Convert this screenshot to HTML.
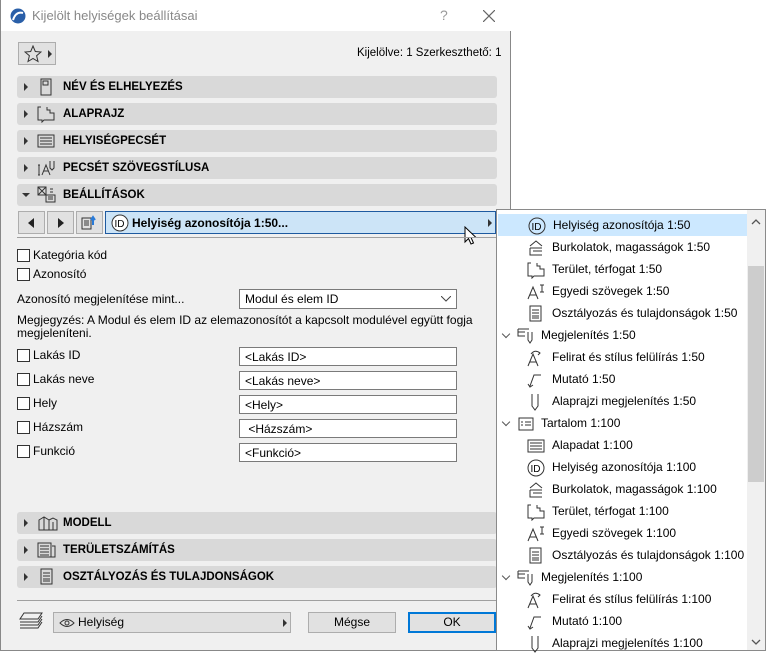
<!DOCTYPE html>
<html><head><meta charset="utf-8"><style>
*{box-sizing:border-box;margin:0;padding:0}
body{width:766px;height:651px;background:#fff;font-family:"Liberation Sans",sans-serif;font-size:12px;color:#000;position:relative;overflow:hidden}
.dlg{position:absolute;left:0;top:0;width:511px;height:651px;background:#f0f0f0;border:1px solid #888;border-top:none}
.title{position:absolute;left:0;top:0;width:510px;height:31px;background:#fff;color:#888;font-size:13px}
.abs{position:absolute}
.sec{position:absolute;left:16px;width:480px;height:22px;background:#d9d9d9;border-radius:3px;font-weight:bold;font-size:11.5px}
.sec .tri{position:absolute;left:7px;top:7px;width:0;height:0;border-left:4px solid #333;border-top:4px solid transparent;border-bottom:4px solid transparent}
.sec .lbl{position:absolute;left:46px;top:5px}
.sec svg{position:absolute;left:20px;top:2px}
.cb{position:absolute;left:16px;width:13px;height:13px;border:1px solid #333;background:#fff}
.cbl{position:absolute;left:32px}
.inp{position:absolute;left:238px;width:218px;height:19px;border:1px solid #7a7a7a;background:#fff;padding:2px 5px}
.btn{position:absolute;height:21px;border:1px solid #adadad;background:#e1e1e1;text-align:center;line-height:19px}
.pop{position:absolute;left:496px;top:209px;width:270px;height:442px;background:#fff;border:1px solid #8a8a8a}
.it{position:absolute;left:0;width:249px;height:22px;line-height:22px}
.it span{position:absolute;left:55px}
.it.g span{left:44px}
.it svg{position:absolute;left:30px;top:3px}
.it.g svg{left:20px}
.chev{position:absolute;left:6px;top:7px;width:6px;height:6px;border-right:1.3px solid #555;border-bottom:1.3px solid #555;transform:rotate(45deg)}
</style></head><body>
<div class="dlg">
 <div class="title">
  <svg class="abs" style="left:9px;top:8px" width="16" height="16"><circle cx="8" cy="8" r="7.5" fill="#2a5fa8"/><path d="M3 12 Q6 3 13 5" stroke="#fff" stroke-width="2" fill="none"/></svg>
  <div class="abs" style="left:31px;top:8px">Kijelölt helyiségek beállításai</div>
  <div class="abs" style="left:439px;top:7px;color:#999;font-size:14px">?</div>
  <svg class="abs" style="left:482px;top:10px" width="12" height="12"><path d="M0 0L12 12M12 0L0 12" stroke="#666" stroke-width="1.2"/></svg>
 </div>
 <div class="abs" style="left:17px;top:42px;width:38px;height:23px;border:1px solid #adadad;background:#e1e1e1">
  <svg class="abs" style="left:5px;top:2px" width="18" height="18"><path d="M9 1L11.3 6.5 17 7 12.6 10.7 14 16.5 9 13.5 4 16.5 5.4 10.7 1 7 6.7 6.5Z" fill="none" stroke="#333"/></svg>
  <div class="abs" style="left:29px;top:7px;border-left:4px solid #333;border-top:4px solid transparent;border-bottom:4px solid transparent"></div>
 </div>
 <div class="abs" style="left:356px;top:47px;font-size:11.5px">Kijelölve: 1 Szerkeszthető: 1</div>

 <div class="sec" style="top:76px"><div class="tri"></div><svg width="18" height="18"><rect x="4" y="1" width="10" height="16" fill="none" stroke="#333"/><rect x="6" y="3" width="5" height="4" fill="none" stroke="#333"/></svg><div class="lbl">NÉV ÉS ELHELYEZÉS</div></div>
 <div class="sec" style="top:103px"><div class="tri"></div><svg width="20" height="18"><path d="M4 2H1V15H5V17L7 15H17V8H13V5H10V2" fill="none" stroke="#333"/></svg><div class="lbl">ALAPRAJZ</div></div>
 <div class="sec" style="top:130px"><div class="tri"></div><svg width="20" height="18"><rect x="1" y="3" width="16" height="12" fill="none" stroke="#333"/><path d="M3 6H15M3 9H15M3 12H15" stroke="#333"/></svg><div class="lbl">HELYISÉGPECSÉT</div></div>
 <div class="sec" style="top:157px"><div class="tri"></div><svg width="24" height="18"><path d="M2 6V16M1 6H3M1 16H3M5 16L9 6 13 16M7 12H11M13 2V9L15 11 17 9V2" fill="none" stroke="#333"/></svg><div class="lbl">PECSÉT SZÖVEGSTÍLUSA</div></div>
 <div class="sec" style="top:184px"><div class="tri" style="left:5px;top:9px;border-left:4px solid transparent;border-right:4px solid transparent;border-top:4px solid #333;border-bottom:none"></div><svg width="22" height="18"><rect x="1" y="1" width="8" height="8" fill="none" stroke="#333"/><path d="M1 1L9 9M9 1L1 9" stroke="#333"/><rect x="9" y="9" width="9" height="7" fill="none" stroke="#333"/><path d="M11 11H16M11 13H16M13 3H16M13 6H16" stroke="#333"/></svg><div class="lbl">BEÁLLÍTÁSOK</div></div>

 <div class="btn" style="left:17px;top:211px;width:27px;height:23px"><div class="abs" style="left:9px;top:6px;border-right:6px solid #222;border-top:5px solid transparent;border-bottom:5px solid transparent"></div></div>
 <div class="btn" style="left:46px;top:211px;width:27px;height:23px"><div class="abs" style="left:10px;top:6px;border-left:6px solid #222;border-top:5px solid transparent;border-bottom:5px solid transparent"></div></div>
 <div class="btn" style="left:75px;top:211px;width:27px;height:23px"><svg class="abs" style="left:4px;top:3px" width="18" height="16"><rect x="1" y="3" width="9" height="11" fill="none" stroke="#333"/><path d="M3 6H8M3 8H8M3 10H8" stroke="#333"/><path d="M12 10V3M10 5L12 2 14 5" stroke="#2a7bd8" stroke-width="2" fill="none"/></svg></div>
 <div class="abs" style="left:104px;top:211px;width:391px;height:23px;background:#cce4f7;border:1px solid #1e5aa0">
  <svg class="abs" style="left:5px;top:2px" width="18" height="18"><circle cx="9" cy="9" r="8" fill="#fff" stroke="#333"/><text x="3.5" y="13" font-size="10" font-family="Liberation Sans">ID</text></svg>
  <div class="abs" style="left:26px;top:4px;font-weight:bold">Helyiség azonosítója 1:50...</div>
  <div class="abs" style="left:382px;top:7px;border-left:4px solid #333;border-top:4px solid transparent;border-bottom:4px solid transparent"></div>
 </div>
 <svg class="abs" style="left:463px;top:226px" width="14" height="20"><path d="M1 1V16L4.5 12.5 7 18 9.5 17 7 11.5H12Z" fill="#fff" stroke="#000"/></svg>
 <div class="abs" style="left:16px;top:237px;width:480px;border-top:1px solid #a0a0a0"></div>

 <div class="cb" style="top:249px"></div><div class="cbl" style="top:248px">Kategória kód</div>
 <div class="cb" style="top:268px"></div><div class="cbl" style="top:267px">Azonosító</div>
 <div class="abs" style="left:16px;top:292px">Azonosító megjelenítése mint...</div>
 <div class="inp" style="top:289px;height:20px;padding-top:2px">Modul és elem ID<svg class="abs" style="right:5px;top:6px" width="10" height="6"><path d="M0 0L5 5 10 0" fill="none" stroke="#444"/></svg></div>
 <div class="abs" style="left:16px;top:314px;line-height:13px;width:470px">Megjegyzés: A Modul és elem ID az elemazonosítót a kapcsolt modulével együtt fogja megjeleníteni.</div>

 <div class="cb" style="top:349px"></div><div class="cbl" style="top:348px">Lakás ID</div><div class="inp" style="top:347px">&lt;Lakás ID&gt;</div>
 <div class="cb" style="top:373px"></div><div class="cbl" style="top:372px">Lakás neve</div><div class="inp" style="top:371px">&lt;Lakás neve&gt;</div>
 <div class="cb" style="top:397px"></div><div class="cbl" style="top:396px">Hely</div><div class="inp" style="top:395px">&lt;Hely&gt;</div>
 <div class="cb" style="top:421px"></div><div class="cbl" style="top:420px">Házszám</div><div class="inp" style="top:419px">&nbsp;&lt;Házszám&gt;</div>
 <div class="cb" style="top:445px"></div><div class="cbl" style="top:444px">Funkció</div><div class="inp" style="top:443px">&lt;Funkció&gt;</div>

 <div class="sec" style="top:512px"><div class="tri"></div><svg width="22" height="18"><path d="M2 6L7 3 12 6V16H2Z M7 3V16M12 6L16 4 20 6V16H12M16 8V16" fill="none" stroke="#333"/></svg><div class="lbl">MODELL</div></div>
 <div class="sec" style="top:539px"><div class="tri"></div><svg width="22" height="18"><rect x="1" y="2" width="13" height="14" fill="none" stroke="#333"/><path d="M3 5H12M3 8H12M3 11H12M3 14H12M15 5H18V16H14" fill="none" stroke="#333"/></svg><div class="lbl">TERÜLETSZÁMÍTÁS</div></div>
 <div class="sec" style="top:566px"><div class="tri"></div><svg width="20" height="18"><rect x="4" y="1" width="11" height="15" fill="none" stroke="#333"/><path d="M6 5H13M6 8H13M6 11H13M6 13H13" stroke="#333"/></svg><div class="lbl">OSZTÁLYOZÁS ÉS TULAJDONSÁGOK</div></div>
 <div class="abs" style="left:16px;top:600px;width:480px;border-top:1px solid #a0a0a0"></div>

 <svg class="abs" style="left:17px;top:611px" width="26" height="20"><path d="M6 2H24L20 8H2Z M2 11H20L24 5 M2 14H20L24 8 M2 17H20L24 11" fill="none" stroke="#333"/></svg>
 <div class="btn" style="left:52px;top:612px;width:238px;text-align:left;padding-left:24px">Helyiség<svg class="abs" style="left:5px;top:5px" width="16" height="10"><path d="M1 5Q8 -2 15 5Q8 12 1 5Z" fill="none" stroke="#333"/><circle cx="8" cy="5" r="2" fill="none" stroke="#333"/></svg><div class="abs" style="left:229px;top:6px;border-left:4px solid #333;border-top:4px solid transparent;border-bottom:4px solid transparent"></div></div>
 <div class="btn" style="left:307px;top:612px;width:88px">Mégse</div>
 <div class="btn" style="left:407px;top:612px;width:88px;border:2px solid #0078d7;line-height:17px">OK</div>
</div>

<div class="pop">
 <div class="abs" style="left:250px;top:0;width:18px;height:440px;background:#f0f0f0"></div>
 <div class="abs" style="left:251px;top:56px;width:16px;height:216px;background:#cdcdcd"></div>
 <svg class="abs" style="left:254px;top:9px" width="10" height="6"><path d="M1 5L5 1 9 5" fill="none" stroke="#555" stroke-width="1.3"/></svg>
 <svg class="abs" style="left:254px;top:429px" width="10" height="6"><path d="M1 1L5 5 9 1" fill="none" stroke="#555" stroke-width="1.3"/></svg>

 <div class="it" style="top:4px;left:1px;background:#cce8ff"><svg width="18" height="18"><circle cx="9" cy="9" r="8" fill="none" stroke="#333"/><text x="3.5" y="13" font-size="10" font-family="Liberation Sans">ID</text></svg><span>Helyiség azonosítója 1:50</span></div>
 <div class="it" style="top:26px"><svg width="18" height="18"><path d="M3 7L9 2 15 7M3 9H15M3 9V16H15M6 12H15" fill="none" stroke="#333"/></svg><span>Burkolatok, magasságok 1:50</span></div>
 <div class="it" style="top:48px"><svg width="20" height="18"><path d="M4 2H1V15H5V17L7 15H17V8H13V5H10V2" fill="none" stroke="#333"/></svg><span>Terület, térfogat 1:50</span></div>
 <div class="it" style="top:70px"><svg width="20" height="18"><path d="M1 16L6 4 11 16M3 12H9M13 2H17M15 2V9M13 9H17" fill="none" stroke="#333"/></svg><span>Egyedi szövegek 1:50</span></div>
 <div class="it" style="top:92px"><svg width="18" height="18"><rect x="3" y="1" width="11" height="15" fill="none" stroke="#333"/><path d="M5 5H12M5 8H12M5 11H12M5 13H12" stroke="#333"/></svg><span>Osztályozás és tulajdonságok 1:50</span></div>
 <div class="it g" style="top:114px"><div class="chev"></div><svg width="20" height="18"><path d="M1 2H12M1 2V9H8M1 5H8M11 5V13L13 16 15 13V5" fill="none" stroke="#333"/></svg><span>Megjelenítés 1:50</span></div>
 <div class="it" style="top:136px"><svg width="20" height="18"><path d="M1 17L6 5 11 17M3 13H9M4 5Q8 0 13 4L11 6" fill="none" stroke="#333"/></svg><span>Felirat és stílus felülírás 1:50</span></div>
 <div class="it" style="top:158px"><svg width="20" height="18"><path d="M3 15L7 4H14M1 13L3 16 6 14" fill="none" stroke="#333"/></svg><span>Mutató 1:50</span></div>
 <div class="it" style="top:180px"><svg width="18" height="18"><path d="M5 1V13L8 17 11 13V1" fill="none" stroke="#333"/></svg><span>Alaprajzi megjelenítés 1:50</span></div>
 <div class="it g" style="top:202px"><div class="chev"></div><svg width="20" height="18"><rect x="2" y="3" width="14" height="12" fill="none" stroke="#333"/><path d="M4 7H6M8 7H14M4 10H6M8 10H14" stroke="#333"/></svg><span>Tartalom 1:100</span></div>
 <div class="it" style="top:224px"><svg width="20" height="18"><rect x="1" y="3" width="16" height="12" fill="none" stroke="#333"/><path d="M3 6H15M3 9H15M3 12H15" stroke="#333"/></svg><span>Alapadat 1:100</span></div>
 <div class="it" style="top:246px"><svg width="18" height="18"><circle cx="9" cy="9" r="8" fill="none" stroke="#333"/><text x="3.5" y="13" font-size="10" font-family="Liberation Sans">ID</text></svg><span>Helyiség azonosítója 1:100</span></div>
 <div class="it" style="top:268px"><svg width="18" height="18"><path d="M3 7L9 2 15 7M3 9H15M3 9V16H15M6 12H15" fill="none" stroke="#333"/></svg><span>Burkolatok, magasságok 1:100</span></div>
 <div class="it" style="top:290px"><svg width="20" height="18"><path d="M4 2H1V15H5V17L7 15H17V8H13V5H10V2" fill="none" stroke="#333"/></svg><span>Terület, térfogat 1:100</span></div>
 <div class="it" style="top:312px"><svg width="20" height="18"><path d="M1 16L6 4 11 16M3 12H9M13 2H17M15 2V9M13 9H17" fill="none" stroke="#333"/></svg><span>Egyedi szövegek 1:100</span></div>
 <div class="it" style="top:334px"><svg width="18" height="18"><rect x="3" y="1" width="11" height="15" fill="none" stroke="#333"/><path d="M5 5H12M5 8H12M5 11H12M5 13H12" stroke="#333"/></svg><span>Osztályozás és tulajdonságok 1:100</span></div>
 <div class="it g" style="top:356px"><div class="chev"></div><svg width="20" height="18"><path d="M1 2H12M1 2V9H8M1 5H8M11 5V13L13 16 15 13V5" fill="none" stroke="#333"/></svg><span>Megjelenítés 1:100</span></div>
 <div class="it" style="top:378px"><svg width="20" height="18"><path d="M1 17L6 5 11 17M3 13H9M4 5Q8 0 13 4L11 6" fill="none" stroke="#333"/></svg><span>Felirat és stílus felülírás 1:100</span></div>
 <div class="it" style="top:400px"><svg width="20" height="18"><path d="M3 15L7 4H14M1 13L3 16 6 14" fill="none" stroke="#333"/></svg><span>Mutató 1:100</span></div>
 <div class="it" style="top:422px"><svg width="18" height="18"><path d="M5 1V13L8 17 11 13V1" fill="none" stroke="#333"/></svg><span>Alaprajzi megjelenítés 1:100</span></div>
</div>
</body></html>
